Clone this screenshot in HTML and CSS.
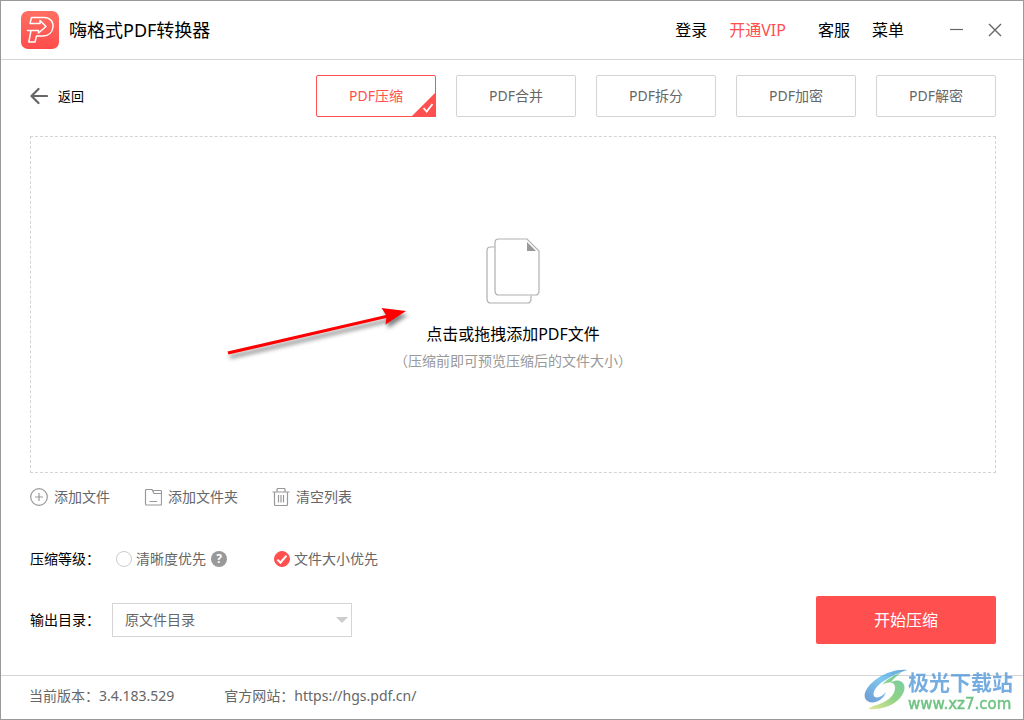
FILE: index.html
```html
<!DOCTYPE html>
<html lang="zh-CN">
<head>
<meta charset="utf-8">
<meta name="viewport" content="width=device-width, initial-scale=1">
<title>嗨格式PDF转换器</title>
<link rel="stylesheet" href="styles.css">
</head>
<body>
<div class="window">
  <header class="titlebar">
    <svg class="logo" viewBox="0 0 38 38" aria-hidden="true">
      <defs>
        <linearGradient id="logo-fill" x1="0" y1="0" x2="0" y2="1">
          <stop offset="0" stop-color="#ff6f62"/>
          <stop offset="1" stop-color="#ff4c4c"/>
        </linearGradient>
      </defs>
      <rect width="38" height="38" rx="7" fill="url(#logo-fill)"/>
      <path d="M9 12.500L10.500 6.500H23c6 0 9.500 4 9 9.500-.6 5.500-4.500 9-10 9h-6.500L14 31H7.800L10 19.500h7.500v2.500l7.500-6.500-6-6v3H9M10 19.500H6.500" fill="none" stroke="#fff" stroke-width="1.500" stroke-linejoin="round" stroke-linecap="round"/>
    </svg>
    <h1 class="app-name">嗨格式PDF转换器</h1>
    <nav class="menu">
      <a class="menu-link" href="#">登录</a>
      <a class="menu-link menu-link-vip" href="#">开通VIP</a>
      <a class="menu-link" href="#">客服</a>
      <a class="menu-link" href="#">菜单</a>
    </nav>
    <div class="window-controls">
      <button class="icon-button" type="button" aria-label="最小化">
        <svg class="control-icon" viewBox="0 0 14 14"><path d="M0 6.500h13" stroke="#666" stroke-width="1.200"/></svg>
      </button>
      <button class="icon-button" type="button" aria-label="关闭">
        <svg class="control-icon" viewBox="0 0 14 14"><path d="M1 1l12 12M13 1L1 13" stroke="#666" stroke-width="1.400"/></svg>
      </button>
    </div>
  </header>

  <main class="content">
    <div class="toolbar">
      <button class="back" type="button">
        <svg class="back-icon" viewBox="0 0 18 18" aria-hidden="true"><path d="M17 9H2M8.500 2L1.500 9l7 7" fill="none" stroke="#666" stroke-width="2.200" stroke-linecap="round" stroke-linejoin="round"/></svg>
        返回
      </button>
      <div class="tabs">
        <button class="tab tab-active" type="button">PDF压缩
          <svg class="tab-mark" viewBox="0 0 25 25" aria-hidden="true"><path d="M25 0v25H0z" fill="#ff4f4f"/><path d="M12.500 16l3.200 3.500L21.500 12" fill="none" stroke="#fff" stroke-width="1.800"/></svg>
        </button>
        <button class="tab" type="button">PDF合并</button>
        <button class="tab" type="button">PDF拆分</button>
        <button class="tab" type="button">PDF加密</button>
        <button class="tab" type="button">PDF解密</button>
      </div>
    </div>

    <section class="dropzone">
      <svg class="files-icon" viewBox="0 0 54 66" aria-hidden="true">
        <g fill="none" stroke="#b0b0b0" stroke-width="1.200">
          <path d="M8.500 9H4.500A3.500 3.500 0 0 0 1 12.500v49A3.500 3.500 0 0 0 4.500 65h37a3.500 3.500 0 0 0 3.500-3.500V57.500"/>
          <path d="M12.500 1H41L53 13v40.500a3.500 3.500 0 0 1-3.500 3.500h-37A3.500 3.500 0 0 1 9 53.500v-49A3.500 3.500 0 0 1 12.500 1z"/>
        </g>
        <path d="M41 4v9h9z" fill="#999"/>
      </svg>
      <p class="drop-title">点击或拖拽添加PDF文件</p>
      <p class="drop-note">（压缩前即可预览压缩后的文件大小）</p>
      <svg class="pointer" viewBox="0 0 200 70" aria-hidden="true">
        <path d="M12.500 56.500L171 20l-4.500-7L191 16l-20.500 13.500.8-6.500L13.500 59.500z" fill="#f00"/>
      </svg>
    </section>

    <div class="actions">
      <button class="action" type="button">
        <svg class="action-icon" viewBox="0 0 18 18" aria-hidden="true"><g fill="none" stroke="#999" stroke-width="1.200"><circle cx="9" cy="9" r="8.300"/><path d="M9 5v8M5 9h8"/></g></svg>
        添加文件
      </button>
      <button class="action" type="button">
        <svg class="action-icon" viewBox="0 0 18 18" aria-hidden="true"><path d="M2.500 1.500H8l2 4h7.500v10.500a1 1 0 0 1-1 1h-14a1 1 0 0 1-1-1v-13.500a1 1 0 0 1 1-1zM9 2.500h7.500a1 1 0 0 1 1 1v2M5.500 13.500h7.500" fill="none" stroke="#999" stroke-width="1.200" stroke-linejoin="round"/></svg>
        添加文件夹
      </button>
      <button class="action" type="button">
        <svg class="action-icon" viewBox="0 0 18 18" aria-hidden="true"><path d="M.5 4h17M5 4V1.500a1 1 0 0 1 1-1h6a1 1 0 0 1 1 1V4M2.500 4v12.500a1 1 0 0 0 1 1h11a1 1 0 0 0 1-1V4M6.500 7v7.500M9 7v7.500M11.500 7v7.500" fill="none" stroke="#999" stroke-width="1.200"/></svg>
        清空列表
      </button>
    </div>

    <div class="levels" role="radiogroup" aria-labelledby="level-label">
      <span class="field-label" id="level-label">压缩等级：</span>
      <div class="level-option">
        <input class="radio" type="radio" name="level" id="level-clear">
        <label class="radio-label" for="level-clear">清晰度优先</label>
        <button class="help" type="button" aria-label="帮助">?</button>
      </div>
      <div class="level-option">
        <input class="radio" type="radio" name="level" id="level-size" checked>
        <label class="radio-label" for="level-size">文件大小优先</label>
      </div>
    </div>

    <div class="output">
      <label class="field-label" for="output-dir">输出目录：</label>
      <div class="select-box">
        <select class="select" id="output-dir">
          <option>原文件目录</option>
        </select>
      </div>
      <button class="start" type="button">开始压缩</button>
    </div>
  </main>

  <footer class="statusbar">
    <span>当前版本：3.4.183.529</span>
    <span>官方网站：<a class="site-link" href="https://hgs.pdf.cn/">https://hgs.pdf.cn/</a></span>
  </footer>

  <div class="watermark">
    <svg class="watermark-logo" viewBox="0 0 44 44" aria-hidden="true">
      <defs>
        <linearGradient id="swirl-blue" x1="1" y1="0" x2="0" y2="1">
          <stop offset="0" stop-color="#4a93d4"/>
          <stop offset=".45" stop-color="#69bfee"/>
          <stop offset="1" stop-color="#5588cc"/>
        </linearGradient>
        <linearGradient id="swirl-green" x1="1" y1="0" x2="0" y2="1">
          <stop offset="0" stop-color="#5cc49a"/>
          <stop offset=".5" stop-color="#7ccb72"/>
          <stop offset="1" stop-color="#dfe481"/>
        </linearGradient>
      </defs>
      <path d="M43 1C34 0 23 3 14 9 5 15-1 23 1 29c2 5 9 6 15 2 3-2 5-5 6-8-4 5-10 7-12 4-2-4 3-11 10-15C26 8 33 4 43 1z" fill="url(#swirl-blue)"/>
      <path d="M38 3C30 6 23 10 18 16c7-4 13-3 13 3 0 8-9 15-22 18l-5 3c13 1 25-3 32-11 6-7 6-15 0-17-3-1-6 0-9 1 3-4 7-7 11-10z" fill="url(#swirl-green)"/>
    </svg>
    <div>
      <div class="watermark-name">极光下载站</div>
      <div class="watermark-url">www.xz7.com</div>
    </div>
  </div>
</div>
</body>
</html>
```
FILE: styles.css
```css
*,
*::before,
*::after {
  box-sizing: border-box;
}

body,
button,
select {
  font-family: "Noto Sans", "Noto Sans CJK SC", sans-serif;
  font-size: 14px;
  line-height: 20px;
}

body {
  margin: 0;
  color: #666;
  background: #fff;
}

h1,
p {
  margin: 0;
}

button {
  padding: 0;
  border: 0;
  color: inherit;
  background: none;
  cursor: pointer;
}

a {
  color: inherit;
  text-decoration: none;
}

svg {
  display: block;
  flex: none;
}

.window {
  position: relative;
  display: flex;
  flex-direction: column;
  min-height: 100vh;
  border: 1px solid #999;
}

.titlebar {
  display: flex;
  align-items: center;
  height: 59px;
  padding: 0 21px 0 20px;
  border-bottom: 1px solid #d4d4d4;
}

.logo {
  width: 38px;
  height: 38px;
}

.app-name {
  margin-left: 10px;
  font-size: 18px;
  font-weight: 400;
  line-height: 24px;
  color: #000;
}

.menu {
  display: flex;
  gap: 22px;
  margin-left: auto;
  font-size: 16px;
  line-height: 24px;
  color: #000;
}

.menu-link-vip {
  margin-right: 10px;
  color: #ff4f4f;
}

.window-controls {
  display: flex;
  gap: 24px;
  margin-left: 46px;
}

.control-icon {
  width: 14px;
  height: 14px;
}

.content {
  display: flex;
  flex: 1;
  flex-direction: column;
  padding: 15px 27px 31px 29px;
}

.toolbar {
  display: flex;
  align-items: center;
  justify-content: space-between;
}

.back {
  display: flex;
  align-items: center;
  gap: 10px;
  font-size: 13px;
  color: #000;
}

.back-icon {
  width: 18px;
  height: 18px;
}

.tabs {
  display: flex;
  gap: 20px;
}

.tab {
  position: relative;
  width: 120px;
  height: 42px;
  border: 1px solid #d4d4d4;
  border-radius: 2px;
}

.tab-active {
  border-color: #ff4f4f;
  color: #ff4f4f;
}

.tab-mark {
  position: absolute;
  right: -1px;
  bottom: -1px;
  width: 25px;
  height: 25px;
}

.dropzone {
  position: relative;
  display: flex;
  flex: 1;
  flex-direction: column;
  align-items: center;
  justify-content: center;
  margin-top: 19px;
  border: 1px dashed #d4d4d4;
}

.files-icon {
  width: 54px;
  height: 66px;
}

.drop-title {
  margin-top: 18px;
  font-size: 16px;
  line-height: 24px;
  color: #000;
}

.drop-note {
  margin-top: 5px;
  color: #999;
}

.pointer {
  position: absolute;
  top: calc(50% - 10px);
  left: calc(50% - 298px);
  width: 200px;
  height: 70px;
  filter: drop-shadow(2px 4px 2px rgba(0, 0, 0, 0.5));
}

.actions {
  display: flex;
  align-items: center;
  gap: 34px;
  height: 48px;
}

.action {
  display: flex;
  align-items: center;
  gap: 6px;
}

.action-icon {
  width: 18px;
  height: 18px;
}

.levels {
  display: flex;
  align-items: center;
  height: 32px;
  margin-top: 22px;
}

.field-label {
  color: #000;
}

.level-option {
  display: flex;
  align-items: center;
  margin-left: 16px;
}

.level-option + .level-option {
  margin-left: 47px;
}

.radio {
  display: grid;
  width: 16px;
  height: 16px;
  margin: 0 4px 0 0;
  border: 1px solid #ccc;
  border-radius: 50%;
  appearance: none;
}

.radio:checked {
  border-color: #ff4f4f;
  background: #ff4f4f;
}

.radio:checked::before {
  content: "";
  place-self: center;
  width: 10px;
  height: 5px;
  margin-bottom: 2px;
  border: solid #fff;
  border-width: 0 0 2px 2px;
  transform: rotate(-48deg);
}

.help {
  width: 16px;
  height: 16px;
  margin-left: 5px;
  border-radius: 50%;
  font-size: 12px;
  font-weight: 700;
  line-height: 16px;
  color: #fff;
  background: #999;
}

.output {
  display: flex;
  align-items: center;
  margin-top: 21px;
}

.select-box {
  position: relative;
  width: 240px;
  margin-left: 12px;
}

.select-box::after {
  content: "";
  position: absolute;
  top: 14px;
  right: 4px;
  border: solid transparent;
  border-width: 6px 6px 0;
  border-top-color: #ccc;
  pointer-events: none;
}

.select {
  display: block;
  width: 100%;
  height: 34px;
  padding: 0 24px 0 12px;
  border: 1px solid #d4d4d4;
  border-radius: 0;
  color: #666;
  background: #fff;
  appearance: none;
}

.start {
  width: 180px;
  height: 48px;
  margin-left: auto;
  border-radius: 2px;
  font-size: 16px;
  color: #fff;
  background: #ff4f4f;
}

.statusbar {
  display: flex;
  gap: 50px;
  padding: 10px 28px 13px;
  border-top: 1px solid #d4d4d4;
}

.watermark {
  position: absolute;
  right: 10px;
  bottom: 6px;
  display: flex;
  align-items: center;
  opacity: 0.85;
}

.watermark-logo {
  width: 44px;
  height: 44px;
}

.watermark-name {
  font-size: 21px;
  font-weight: 700;
  line-height: 25px;
  color: #5f9fdc;
}

.watermark-url {
  font-family: "DejaVu Sans", sans-serif;
  font-size: 15px;
  line-height: 18px;
  color: #55b86c;
  -webkit-text-stroke: 0.5px #55b86c;
}
```
